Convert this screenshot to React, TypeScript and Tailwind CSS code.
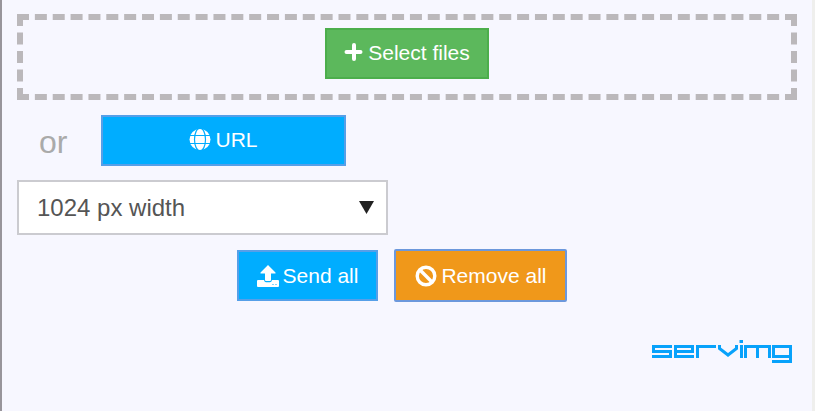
function PlusIcon() {
  return (
    <svg className="h-[22px] w-5" viewBox="0 0 20 22" fill="none" stroke="currentColor" strokeWidth="4" strokeLinecap="round" aria-hidden="true">
      <path d="M10 3V17M2.5 10H16.5" />
    </svg>
  );
}

function GlobeIcon() {
  return (
    <svg className="size-[22px]" viewBox="0 0 22 22" fill="none" aria-hidden="true">
      <circle cx="11" cy="10.5" r="10.5" fill="currentColor" />
      <g stroke="#00adff">
        <path d="M0 6.5H22M0 14.5H22" />
        <ellipse cx="11" cy="10.5" rx="5.5" ry="11.5" strokeWidth="1.2" />
      </g>
    </svg>
  );
}

function UploadIcon() {
  return (
    <svg className="size-[22px]" viewBox="0 0 22 22" fill="currentColor" aria-hidden="true">
      <path d="M11 0L18.5 7.5V8.5H14V15Q14 16 13 16H9Q8 16 8 15V8.5H3.5V7.5Z" />
      <path d="M1 15H7Q7.5 17.3 9 17.3H13Q14.5 17.3 15 15H21Q22 15 22 16V21Q22 22 21 22H1Q0 22 0 21V16Q0 15 1 15Z" />
      <path d="M15.5 19.5H16.5M18.5 19.5H19.5" stroke="#00adff" />
    </svg>
  );
}

function BanIcon() {
  return (
    <svg className="size-[22px]" viewBox="0 0 22 22" fill="none" stroke="currentColor" strokeWidth="3.4" aria-hidden="true">
      <circle cx="11" cy="11" r="8.8" />
      <path d="M4.8 4.8L17.2 17.2" />
    </svg>
  );
}

function ServimgLogo() {
  return (
    <svg className="h-6 w-[140px]" viewBox="0 0 140 24" fill="none" stroke="#08a2fb" strokeWidth="3" role="img" aria-label="servimg">
      <path d="M20 6.5H1.5V11.5H18.5V16.5H0" />
      <path d="M42 16.5H23.5V6.5H40.5V11.5H23" />
      <path d="M45.5 18V6.5H64" />
      <path d="M67.5 5V8.5L76 15L84.5 8.5V5" />
      <path d="M89.5 5V18M87.5 1.5H91" />
      <path d="M93.5 18V6.5H117.5V18M105.5 6V18" />
      <path d="M139 16.5H121.5V6.5H138.5V21.5H120" />
    </svg>
  );
}

const button = "flex items-center justify-center gap-1 border-2 text-[21px] text-white";

export default function App() {
  return (
    <div className="flex min-h-screen bg-white pr-1.5 font-['Liberation_Sans',Arial,sans-serif]">
      <main className="flex-1 border-r-3 border-l-2 border-r-[#efefed] border-l-[#98959b] bg-[#f7f7ff] px-[15px] pt-3.5">
        <div className="flex justify-center border-6 border-dashed border-[#bbb8bb] pt-2 pb-[15px]">
          <button type="button" className={`${button} border-[#4cae4c] bg-[#5cb85c] px-[17px] pb-0.5 leading-[45px]`}>
            <PlusIcon />
            Select files
          </button>
        </div>

        <div className="mt-[15px] flex items-center">
          <span className="w-21 pt-0.5 pl-[22px] text-[32px] leading-none text-[#aaa]">or</span>
          <button type="button" className={`${button} w-[245px] border-[#569fe8] bg-[#00adff] pb-0.5 leading-[45px]`}>
            <GlobeIcon />
            URL
          </button>
        </div>

        <div className="relative mt-3.5 w-[371px] max-w-full">
          <select
            aria-label="Image size"
            className="h-[55px] w-full appearance-none border-2 border-[#cbcbd0] bg-white px-[18px] text-2xl text-[#555]"
          >
            <option>1024 px width</option>
          </select>
          <svg className="pointer-events-none absolute top-[21px] right-3.5 h-[13px] w-[15px]" viewBox="0 0 15 13" fill="#222" aria-hidden="true">
            <path d="M0 0H15L7.5 13Z" />
          </svg>
        </div>

        <div className="mt-3.5 flex items-center justify-center gap-4 pr-2.5">
          <button type="button" className={`${button} border-[#569fe8] bg-[#00adff] px-[18px] leading-[47px]`}>
            <UploadIcon />
            Send all
          </button>
          <button type="button" className={`${button} rounded-xs border-[#6c98dc] bg-[#f0981a] px-[19px] leading-[49px]`}>
            <BanIcon />
            Remove all
          </button>
        </div>

        <div className="mt-[38px] flex justify-end pr-[5px]">
          <a href="#servimg">
            <ServimgLogo />
          </a>
        </div>
      </main>
    </div>
  );
}
